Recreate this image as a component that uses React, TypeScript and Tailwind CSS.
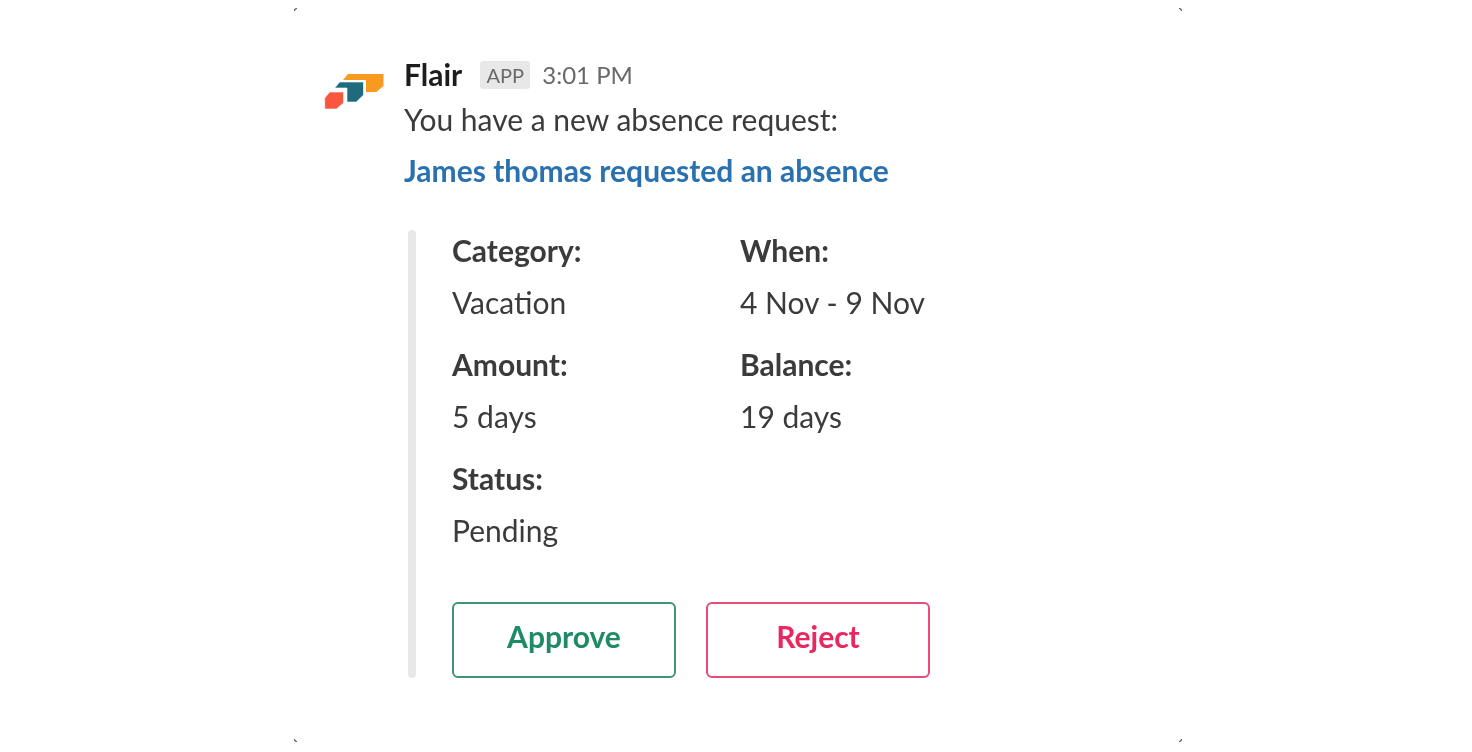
const fields = [
  [
    { label: "Category:", value: "Vacation" },
    { label: "When:", value: "4 Nov - 9 Nov" },
  ],
  [
    { label: "Amount:", value: "5 days" },
    { label: "Balance:", value: "19 days" },
  ],
  [{ label: "Status:", value: "Pending" }],
];

function FlairLogo() {
  return (
    <svg width="60" height="38" viewBox="0 0 60 38" aria-hidden="true">
      <path d="M19 8 L24 2 H59.5 V14 L52.3 20 H42 V8 Z" fill="#f79a1f" />
      <path d="M10.7 16 L15.7 10 H39.5 V23 L32.3 30 H23 V16 Z" fill="#1d6b7c" stroke="#fff" strokeWidth="0.6" />
      <path d="M0.7 26 L5.7 20 H19.5 V31 L12.3 37 H0.7 Z" fill="#f9553f" stroke="#fff" strokeWidth="0.6" />
    </svg>
  );
}

function Corner({ className }: { className: string }) {
  return <span className={`absolute h-[3px] w-[3px] border-[#555] ${className}`} />;
}

export default function App() {
  return (
    <div className="h-[752px] w-[1472px] bg-white pl-[294px] pt-2 font-['Lato',sans-serif] text-[30px] text-[#3b3b3d]">
      <div className="relative flex h-[734px] w-[888px] gap-5 pl-[30px] pt-[45px]">
        <Corner className="left-0 top-0 rounded-tl-[3px] border-l border-t" />
        <Corner className="right-0 top-0 rounded-tr-[3px] border-r border-t" />
        <Corner className="bottom-0 left-0 rounded-bl-[3px] border-b border-l" />
        <Corner className="bottom-0 right-0 rounded-br-[3px] border-b border-r" />

        <div className="mt-[19px] h-[40px] w-[60px] shrink-0 [filter:blur(0.7px)]">
          <FlairLogo />
        </div>

        <div className="flex flex-col [filter:blur(0.7px)]">
          <div className="flex h-[44px] items-center">
            <span className="pb-[2px] font-bold text-[#1d1c1d]">Flair</span>
            <span className="ml-[18px] flex h-[28px] w-[50px] items-center justify-center rounded-[3px] bg-[#e8e8e8] text-[20px] text-[#696969]">
              APP
            </span>
            <span className="ml-3 text-[24px] text-[#696969]">3:01 PM</span>
          </div>
          <div className="flex h-[44px] items-center">You have a new absence request:</div>
          <div className="mt-[7px] flex h-[44px] items-center font-bold text-[#2a71b0]">
            James thomas requested an absence
          </div>

          <div className="mt-[38px] flex h-[448px] gap-[36px] pl-1">
            <div className="w-2 rounded-full bg-[#e8e8e8]" />
            <div className="-mt-[2px] flex flex-col">
              {fields.map((row) => (
                <div key={row[0].label} className="mb-[18px] grid w-[560px] grid-cols-[288px_1fr]">
                  {row.map((f) => (
                    <div key={f.label} className="flex flex-col gap-2">
                      <div className="flex h-[44px] items-center font-bold">{f.label}</div>
                      <div className="flex h-[44px] items-center">{f.value}</div>
                    </div>
                  ))}
                </div>
              ))}
              <div className="mt-[32px] flex gap-[30px]">
                <button className="flex h-[76px] w-[224px] items-center justify-center rounded-[6px] border-2 border-[#3f9477] pb-2 font-bold text-[#1e8a66]">
                  Approve
                </button>
                <button className="flex h-[76px] w-[224px] items-center justify-center rounded-[6px] border-2 border-[#ec4a78] pb-2 font-bold text-[#e8285f]">
                  Reject
                </button>
              </div>
            </div>
          </div>
        </div>
      </div>
    </div>
  );
}
